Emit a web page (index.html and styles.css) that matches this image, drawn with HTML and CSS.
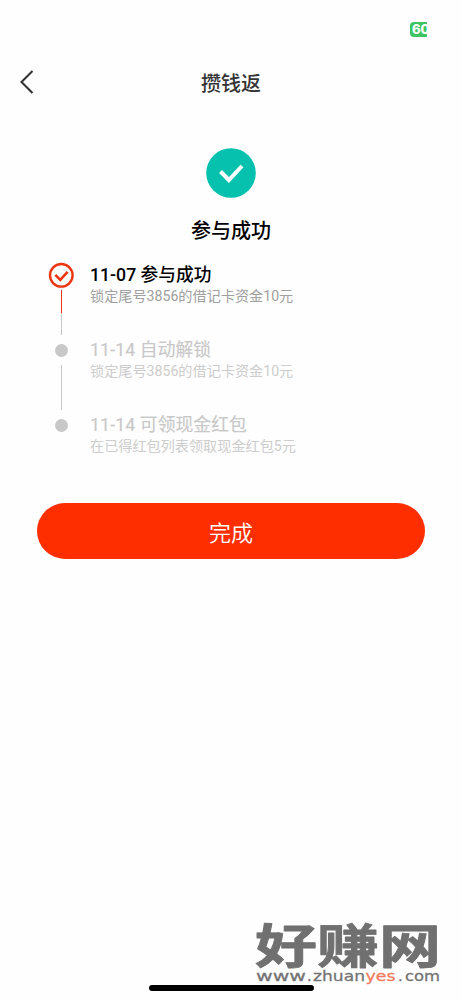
FILE: index.html
```
<!DOCTYPE html>
<html lang="zh-CN">
<head>
<meta charset="utf-8">
<meta name="viewport" content="width=device-width, initial-scale=1">
<title>攒钱返</title>
<link rel="stylesheet" href="styles.css">
</head>
<body>
<div class="screen">
  <div class="status"><span class="battery">60</span></div>
  <header class="nav">
    <svg class="back" width="16" height="26" viewBox="0 0 16 26"><path d="M13.5 2 2.5 13l11 11" fill="none" stroke="#333" stroke-width="2.1"/></svg>
    <h1>攒钱返</h1>
  </header>
  <main>
    <section class="result">
      <svg width="50" height="50" viewBox="0 0 50 50"><circle cx="25" cy="25" r="24.8" fill="#06c1ae"/><path d="m14.5 23.5 8.4 8.5L36 18" fill="none" stroke="#fff" stroke-width="4"/></svg>
      <h2>参与成功</h2>
    </section>
    <ol class="steps">
      <li class="step active">
        <div class="rail">
          <svg class="mark" width="26" height="26" viewBox="0 0 26 26"><circle cx="13.3" cy="13.3" r="11.3" fill="none" stroke="#ec3512" stroke-width="2.4"/><path d="m7.3 12.8 5 5 7.3-8" fill="none" stroke="#ec3512" stroke-width="2.6"/></svg>
          <span class="line reached"></span><span class="line ahead"></span>
        </div>
        <div class="info"><h3>11-07 参与成功</h3><p>锁定尾号3856的借记卡资金10元</p></div>
      </li>
      <li class="step">
        <div class="rail"><span class="dot"></span><span class="line"></span></div>
        <div class="info"><h3>11-14 自动解锁</h3><p>锁定尾号3856的借记卡资金10元</p></div>
      </li>
      <li class="step">
        <div class="rail"><span class="dot"></span></div>
        <div class="info"><h3>11-14 可领现金红包</h3><p>在已得红包列表领取现金红包5元</p></div>
      </li>
    </ol>
    <button class="done">完成</button>
  </main>
  <div class="home"></div>
  <svg class="watermark" width="190" height="90" viewBox="0 -10 190 90">
    <g class="brand">
      <text x="3" y="48.5" textLength="186" lengthAdjust="spacingAndGlyphs">好赚网</text>
    </g>
    <g class="site">
      <text x="4" y="67" textLength="50" lengthAdjust="spacingAndGlyphs">www</text>
      <text x="55" y="67">.</text>
      <text x="61" y="67" textLength="52" lengthAdjust="spacingAndGlyphs">zhuan</text>
      <text class="accent" x="113.5" y="67" textLength="30" lengthAdjust="spacingAndGlyphs">yes</text>
      <text x="146" y="67">.</text>
      <text x="153" y="67" textLength="35" lengthAdjust="spacingAndGlyphs">com</text>
    </g>
  </svg>
</div>
</body>
</html>
```
FILE: styles.css
```
* { box-sizing: border-box; }
body, h1, h2, h3, p, ol { margin: 0; padding: 0; }
body {
  background: #fefefe;
  font-family: Roboto, "Noto Sans CJK SC", sans-serif;
  color: #000;
}
.screen {
  position: relative;
  display: flex;
  flex-direction: column;
  width: 462px;
  height: 1000px;
  overflow: hidden;
}
.status {
  display: flex;
  justify-content: flex-end;
  height: 58px;
  padding: 22px 35px 0 0;
}
.battery {
  width: 17px;
  height: 15px;
  padding-left: 2px;
  overflow: hidden;
  border-radius: 4px 0 0 4px;
  background: #3cc461;
  color: #fff;
  font: 800 13px/15px Inter, sans-serif;
}
.nav {
  display: grid;
  grid-template-columns: 60px 1fr 60px;
  align-items: center;
  height: 48px;
}
.back { margin-left: 19px; }
.nav h1 {
  padding-top: 3px;
  color: #333;
  text-align: center;
  font-size: 20px;
  font-weight: 500;
  line-height: 28px;
}
.result {
  display: flex;
  flex-direction: column;
  align-items: center;
  padding-top: 42px;
}
.result h2 {
  margin-top: 18px;
  font-size: 20px;
  font-weight: 500;
  line-height: 30px;
}
.steps {
  list-style: none;
  padding: 16px 0 0 48px;
}
.step {
  display: flex;
  gap: 16px;
  height: 75px;
  color: #c8c8c8;
}
.rail {
  display: flex;
  flex-direction: column;
  align-items: center;
  width: 26px;
}
.mark { flex: none; }
.dot {
  flex: none;
  width: 13px;
  height: 13px;
  margin: 7px 0 6px;
  border-radius: 50%;
  background: #c8c8c8;
}
.line {
  width: 1px;
  height: 45px;
  margin-top: 2px;
  background: #c8c8c8;
}
.reached {
  height: 23px;
  background: #ec3512;
}
.ahead {
  height: 22px;
  margin-top: 0;
}
.info { padding-top: 1px; }
.info h3 {
  font-size: 17.8px;
  font-weight: 400;
  line-height: 24px;
  letter-spacing: .08px;
  -webkit-text-stroke: .15px currentColor;
}
.info p {
  margin-top: -1px;
  font-size: 14.15px;
  font-weight: 400;
  line-height: 20px;
}
.active h3 {
  color: #000;
  font-size: 17.7px;
  font-weight: 500;
  letter-spacing: 0;
  -webkit-text-stroke: 0;
}
.step p { color: #cdcdcd; }
.active p { color: #a0a0a0; }
.done {
  display: block;
  width: 388px;
  height: 56px;
  margin: 16px 0 0 37px;
  padding: 0;
  border: 0;
  border-radius: 28px;
  background: #ff2e00;
  color: #fff;
  font: 350 22px/56px "Noto Sans CJK SC", sans-serif;
}
.home {
  width: 165px;
  height: 6px;
  margin: auto 0 9px 149px;
  border-radius: 3px;
  background: #000;
}
.watermark {
  position: absolute;
  left: 252px;
  top: 904px;
}
.brand {
  fill: #707070;
  stroke: #707070;
  stroke-width: .8;
  stroke-linejoin: round;
  font: 700 47px "Noto Sans CJK SC", sans-serif;
}
.site {
  fill: #747474;
  stroke: #747474;
  stroke-width: .3;
  font: 14.5px "DejaVu Sans", sans-serif;
}
.accent { fill: #f47b5c; stroke: #f47b5c; }
```
